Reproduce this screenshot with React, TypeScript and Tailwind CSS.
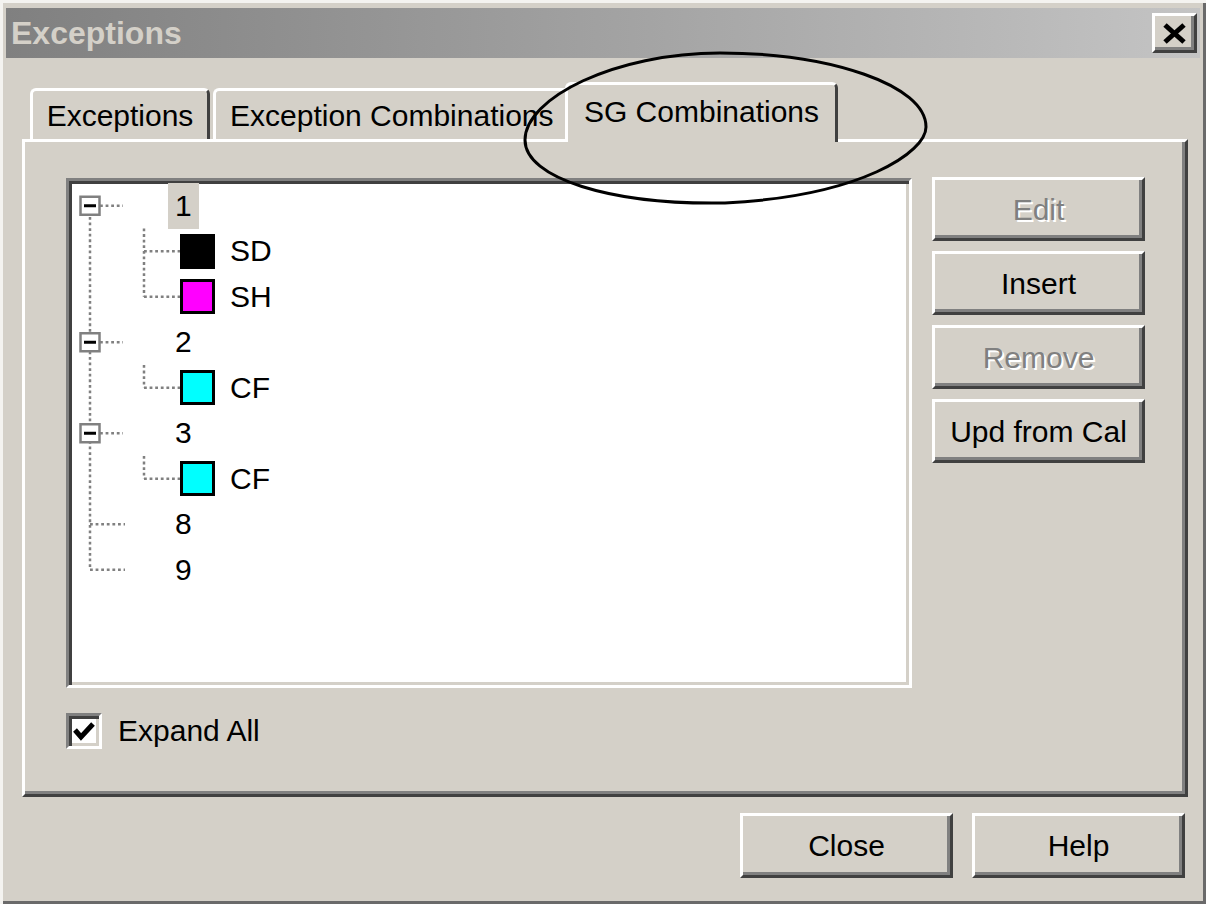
import React from 'react'

const raised =
  'border-[3px] border-t-white border-l-white border-r-[#404040] border-b-[#404040] bg-[#d4d0c8] shadow-[inset_-3px_-3px_0_#808080]'
const disabledText = 'text-[#808080] [text-shadow:2px_2px_0_#ffffff]'

type Row = { label: string; level: 0 | 1; color?: string; selected?: boolean }

const rows: Row[] = [
  { label: '1', level: 0, selected: true },
  { label: 'SD', level: 1, color: 'bg-black' },
  { label: 'SH', level: 1, color: 'bg-[#ff00ff]' },
  { label: '2', level: 0 },
  { label: 'CF', level: 1, color: 'bg-[#00ffff]' },
  { label: '3', level: 0 },
  { label: 'CF', level: 1, color: 'bg-[#00ffff]' },
  { label: '8', level: 0 },
  { label: '9', level: 0 },
]

const ROW_H = 45.5
const c = (i: number) => 24.75 + ROW_H * i

function TreeLines() {
  const dot = { stroke: '#808080', strokeWidth: 2.5, strokeDasharray: '2.8 2.8' }
  const boxes = [0, 3, 5]
  return (
    <svg className="pointer-events-none absolute left-0 top-0" width="840" height="500">
      {/* root level */}
      <line x1="21" y1={c(0)} x2="21" y2={c(8)} {...dot} />
      <line x1="21" y1={c(7)} x2="56" y2={c(7)} {...dot} />
      <line x1="21" y1={c(8)} x2="56" y2={c(8)} {...dot} />
      {boxes.map((i) => (
        <line key={'h' + i} x1="31" y1={c(i)} x2="54" y2={c(i)} {...dot} />
      ))}
      {/* children */}
      <line x1="75" y1={c(0) + 22.75} x2="75" y2={c(2)} {...dot} />
      <line x1="75" y1={c(3) + 22.75} x2="75" y2={c(4)} {...dot} />
      <line x1="75" y1={c(5) + 22.75} x2="75" y2={c(6)} {...dot} />
      {[1, 2, 4, 6].map((i) => (
        <line key={'c' + i} x1="75" y1={c(i)} x2="111" y2={c(i)} {...dot} />
      ))}
      {/* expand boxes */}
      {boxes.map((i) => (
        <g key={'b' + i}>
          <rect x="11.5" y={c(i) - 9} width="19" height="18" fill="#ffffff" stroke="#808080" strokeWidth="2.5" />
          <line x1="15" y1={c(i)} x2="27" y2={c(i)} stroke="#000000" strokeWidth="3" />
        </g>
      ))}
    </svg>
  )
}

function TreeView() {
  return (
    <div className="relative h-[510px] w-[846px] border-[3px] border-t-[#808080] border-l-[#808080] border-r-white border-b-white bg-white shadow-[inset_3px_3px_0_#404040,inset_-3px_-3px_0_#d4d0c8]">
      <TreeLines />
      <div className="flex flex-col pt-[2px] text-[30px] leading-none text-black">
        {rows.map((r, i) =>
          r.level === 0 ? (
            <div key={i} className="flex h-[45.5px] items-center pl-[99px]">
              <span
                className={
                  'flex h-full items-center px-[7px] ' + (r.selected ? 'bg-[#d4d0c8]' : '')
                }
              >
                {r.label}
              </span>
            </div>
          ) : (
            <div key={i} className="flex h-[45.5px] items-center pl-[111px]">
              <span className={'h-[35px] w-[35px] border-[3px] border-black ' + r.color} />
              <span className="ml-[15px]">{r.label}</span>
            </div>
          )
        )}
      </div>
    </div>
  )
}

function SideButton({ label, disabled }: { label: string; disabled?: boolean }) {
  return (
    <div
      className={`flex h-[64px] w-[213px] items-center justify-center text-[30px] ${raised} ${
        disabled ? disabledText : 'text-black'
      }`}
    >
      {label}
    </div>
  )
}

export default function App() {
  return (
    <div className="relative flex h-[904px] w-[1206px] flex-col overflow-hidden bg-[#d4d0c8] font-['Liberation_Sans',Arial,sans-serif] shadow-[inset_3px_3px_0_#f4f3f0,inset_-3px_-3px_0_#6a6a6a]">
      {/* title bar */}
      <div className="mx-[6px] mt-[8px] flex h-[50px] items-center justify-between bg-linear-to-r from-[#808080] to-[#c4c4c4] pl-[5px] pr-[3px]">
        <span className="text-[32px] font-bold text-[#d4d0c8]">Exceptions</span>
        <div className={`flex h-[40px] w-[45px] items-center justify-center ${raised}`}>
          <svg width="25" height="21" viewBox="0 0 25 21">
            <line x1="3" y1="2" x2="22" y2="19" stroke="#000" strokeWidth="5" />
            <line x1="22" y1="2" x2="3" y2="19" stroke="#000" strokeWidth="5" />
          </svg>
        </div>
      </div>

      {/* tabs */}
      <div className="ml-[30px] mt-[24px] flex h-[57px] items-end text-[30px] text-black">
        <div className="flex h-[51px] w-[180px] items-center justify-center rounded-t-[6px] border-l-[3px] border-r-[3px] border-t-[3px] border-l-white border-r-[#404040] border-t-white">
          Exceptions
        </div>
        <div className="ml-[3px] flex h-[51px] w-[352px] items-center rounded-tl-[6px] border-l-[3px] border-t-[3px] border-l-white border-t-white pl-[14px]">
          Exception Combinations
        </div>
        <div className="relative z-10 -mb-[3px] flex h-[60px] w-[273px] items-center justify-center rounded-t-[6px] border-l-[3px] border-r-[3px] border-t-[3px] border-l-white border-r-[#404040] border-t-white bg-[#d4d0c8] pb-[5px]">
          SG Combinations
        </div>
      </div>

      {/* panel */}
      <div className="ml-[22px] flex h-[658px] w-[1166px] flex-col border-[3px] border-t-white border-l-white border-r-[#404040] border-b-[#404040] pl-[41px] pt-[36px] shadow-[inset_-3px_-3px_0_#808080]">
        <div className="flex gap-[20px]">
          <TreeView />
          <div className="-mt-[1px] flex flex-col gap-[10px]">
            <SideButton label="Edit" disabled />
            <SideButton label="Insert" />
            <SideButton label="Remove" disabled />
            <SideButton label="Upd from Cal" />
          </div>
        </div>
        <div className="mt-[20px] flex items-center gap-[16px]">
          <div className="flex h-[36px] w-[36px] items-center justify-center border-[3px] border-t-[#808080] border-l-[#808080] border-r-white border-b-white bg-white shadow-[inset_3px_3px_0_#404040,inset_-3px_-3px_0_#d4d0c8]">
            <svg width="24" height="22" viewBox="0 0 24 22">
              <polyline points="3,10 9,17 21,4" fill="none" stroke="#000" strokeWidth="5" />
            </svg>
          </div>
          <span className="text-[30px] text-black">Expand All</span>
        </div>
      </div>

      {/* bottom buttons */}
      <div className="mt-[16px] flex justify-end gap-[19px] pr-[21px]">
        <div className={`flex h-[65px] w-[213px] items-center justify-center text-[30px] text-black ${raised}`}>
          Close
        </div>
        <div className={`flex h-[65px] w-[213px] items-center justify-center text-[30px] text-black ${raised}`}>
          Help
        </div>
      </div>

      {/* hand-drawn annotation */}
      <svg className="pointer-events-none absolute left-0 top-0 z-20" width="1206" height="904">
        <path
          d="M 926 127 C 926 152, 862 196, 725 203 C 610 205, 525 178, 525 140 C 525 98, 615 53, 720 53 C 830 53, 926 85, 926 127 Z"
          fill="none"
          stroke="#000"
          strokeWidth="3"
        />
      </svg>
    </div>
  )
}
